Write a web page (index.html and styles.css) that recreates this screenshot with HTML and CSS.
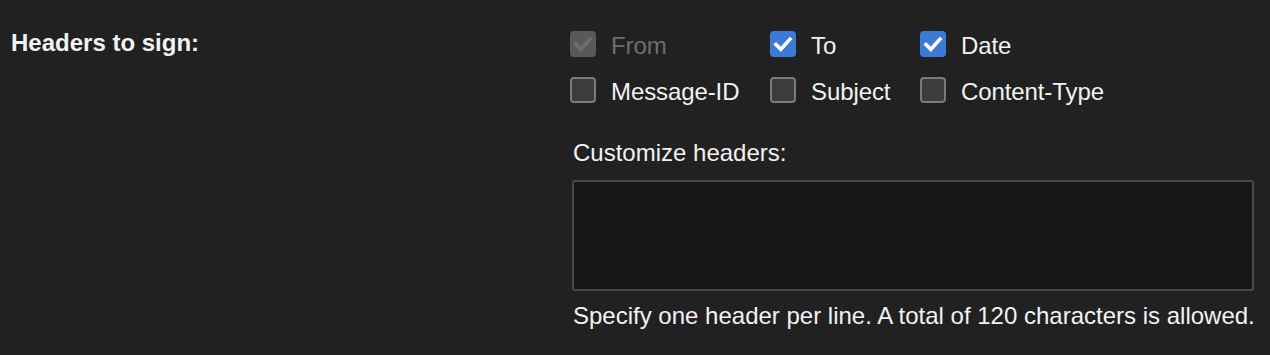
FILE: index.html
```html
<!DOCTYPE html>
<html lang="en">
<head>
    <meta charset="UTF-8">
    <meta name="viewport" content="width=device-width, initial-scale=1.0">
    <title>Headers to sign</title>
    <link rel="stylesheet" href="styles.css">
</head>
<body>
    <div class="setting-row">
        <div class="setting-label">Headers to sign:</div>

        <div class="setting-body">
            <div class="header-grid">
                <label class="check-item disabled">
                    <span class="box checked">
                        <svg viewBox="0 0 26 26"><path d="M6 13.5 L10.8 18.3 L20 8.2" /></svg>
                    </span>
                    <span class="check-text">From</span>
                </label>
                <label class="check-item">
                    <span class="box checked">
                        <svg viewBox="0 0 26 26"><path d="M6 13.5 L10.8 18.3 L20 8.2" /></svg>
                    </span>
                    <span class="check-text">To</span>
                </label>
                <label class="check-item">
                    <span class="box checked">
                        <svg viewBox="0 0 26 26"><path d="M6 13.5 L10.8 18.3 L20 8.2" /></svg>
                    </span>
                    <span class="check-text">Date</span>
                </label>
                <label class="check-item">
                    <span class="box"></span>
                    <span class="check-text">Message-ID</span>
                </label>
                <label class="check-item">
                    <span class="box"></span>
                    <span class="check-text">Subject</span>
                </label>
                <label class="check-item">
                    <span class="box"></span>
                    <span class="check-text">Content-Type</span>
                </label>
            </div>

            <div class="custom-title">Customize headers:</div>
            <textarea class="custom-input"></textarea>
            <div class="hint">Specify one header per line. A total of 120 characters is allowed.</div>
        </div>
    </div>
</body>
</html>
```

FILE: styles.css
```css
body {
    margin: 0;
    background-color: #212121;
    color: #f2f2f2;
    font-family: "Liberation Sans", Arial, sans-serif;
    font-size: 24px;
}
.setting-row {
    display: flex;
    padding-top: 29px;
}
.setting-label {
    width: 559px;
    padding-left: 11px;
    font-weight: bold;
    line-height: 28px;
}
.setting-body {
    width: 700px;
}
.header-grid {
    display: grid;
    grid-template-columns: 200px 150px auto;
    row-gap: 20px;
    padding-top: 2px;
}
.check-item {
    display: flex;
    align-items: center;
    gap: 15px;
    height: 26px;
    line-height: 26px;
    letter-spacing: -0.1px;
}
.check-text {
    padding-top: 4px;
}
.check-item.disabled {
    color: #6e6e6e;
}
.box {
    box-sizing: border-box;
    width: 26px;
    height: 26px;
    border: 2px solid #7a7a7a;
    border-radius: 4px;
    background-color: #3c3c3c;
    flex-shrink: 0;
}
.box svg {
    display: block;
    width: 26px;
    height: 26px;
    margin: -2px;
}
.box svg path {
    fill: none;
    stroke: #ffffff;
    stroke-width: 3.6;
    stroke-linecap: square;
}
.box.checked {
    border: none;
    background-color: #3b7bd6;
}
.box.checked svg {
    margin: 0;
}
.disabled .box.checked {
    background-color: #595959;
}
.disabled .box svg path {
    stroke: #6f6f6f;
}
.custom-title {
    margin-top: 36px;
    padding-left: 3px;
    line-height: 28px;
}
.custom-input {
    display: block;
    box-sizing: border-box;
    width: 682px;
    height: 111px;
    margin: 13px 0 0 2px;
    background-color: #161616;
    border: 2px solid #484848;
    border-radius: 3px;
    resize: none;
    color: #f2f2f2;
}
.hint {
    margin-top: 11px;
    padding-left: 3px;
    line-height: 28px;
    white-space: nowrap;
}
```
